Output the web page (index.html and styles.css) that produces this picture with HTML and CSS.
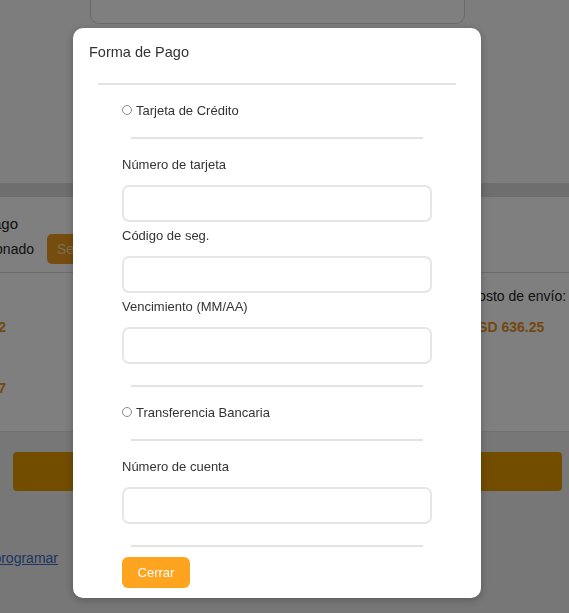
FILE: index.html
```html
<!DOCTYPE html>
<html lang="es">
<head>
<meta charset="utf-8">
<title>Forma de Pago</title>
<link rel="stylesheet" href="styles.css">
</head>
<body>
<div class="page">
  <div class="top-card"></div>
  <div class="top-space"></div>
  <div class="band"></div>
  <section class="pay-section">
    <div class="pay-title">Forma de pago</div>
    <div class="pay-row">
      <span class="pay-status">No seleccionado</span>
      <button class="select-btn" type="button">Seleccionar</button>
    </div>
    <div class="pay-line"></div>
    <div class="totals">
      <div class="totals-left">
        <div class="t-line orange first-val">USD 589.22</div>
        <div class="t-line orange second-val">USD 1,225.47</div>
      </div>
      <div class="totals-gap"></div>
      <div class="totals-right">
        <div class="t-line">Costo de envío:</div>
        <div class="t-line orange">USD 636.25</div>
      </div>
    </div>
  </section>
  <div class="footer-area">
    <div class="big-btn"></div>
    <a class="reprog" href="#">Reprogramar</a>
  </div>
</div>

<div class="overlay">
  <div class="modal">
    <div class="modal-title">Forma de Pago</div>
    <div class="divider-wide"></div>
    <div class="method">
      <label class="radio-row"><span class="radio"></span>Tarjeta de Crédito</label>
      <div class="divider"></div>
      <div class="field-label first">Número de tarjeta</div>
      <input class="field" type="text">
      <div class="field-label">Código de seg.</div>
      <input class="field" type="text">
      <div class="field-label">Vencimiento (MM/AA)</div>
      <input class="field" type="text">
      <div class="divider big"></div>
      <label class="radio-row"><span class="radio"></span>Transferencia Bancaria</label>
      <div class="divider"></div>
      <div class="field-label first">Número de cuenta</div>
      <input class="field" type="text">
      <div class="divider big"></div>
      <button class="close-btn" type="button">Cerrar</button>
    </div>
  </div>
</div>
</body>
</html>
```

FILE: styles.css
```css
* { box-sizing: border-box; }

html, body {
  margin: 0;
  padding: 0;
  height: 100%;
  overflow: hidden;
}

body {
  font-family: "Liberation Sans", Arial, sans-serif;
  color: #333;
  background: #eeeeee;
}

.page {
  width: 569px;
}

.top-card {
  margin-left: 90px;
  width: 375px;
  height: 24px;
  border: 1px solid #d4d4d4;
  border-top: none;
  border-radius: 0 0 9px 9px;
  background: #fff;
}

.top-space {
  background: #fbfbfb;
  margin-top: -24px;
  position: relative;
  z-index: -1;
  height: 183px;
}

.band {
  height: 14px;
  background: #dcdcdc;
}

.pay-section {
  height: 235px;
  background: #fff;
  padding-top: 17px;
  border-bottom: 1px solid #e2e2e2;
}

.pay-title {
  width: 140px;
  margin-left: -122px;
  text-align: right;
  font-size: 15px;
  line-height: 20px;
  color: #222;
}

.pay-row {
  display: flex;
  align-items: center;
  height: 30px;
}

.pay-status {
  width: 130px;
  margin-left: -96px;
  text-align: right;
  font-size: 14px;
  color: #222;
}

.select-btn {
  margin-left: 13px;
  height: 30px;
  padding: 0 10px;
  border: none;
  border-radius: 5px;
  background: #eb9a1e;
  color: #ffd9a0;
  font-family: inherit;
  font-size: 14px;
}

.pay-line {
  margin-top: 8px;
  height: 1px;
  background: #d9d9d9;
}

.totals {
  display: flex;
  padding-top: 14px;
}

.totals-left {
  width: 140px;
  margin-left: -134px;
  text-align: right;
}

.totals-gap { flex: 1; }

.totals-right {
  width: 101px;
}

.t-line {
  font-size: 14px;
  line-height: 18px;
  height: 18px;
  margin-bottom: 13px;
  color: #222;
  white-space: nowrap;
}

.totals-left .first-val { margin-top: 31px; }
.totals-left .second-val { margin-top: 43px; }

.orange {
  color: #e8901c;
  font-weight: bold;
}

.footer-area {
  padding-top: 20px;
}

.big-btn {
  margin: 0 7px 0 13px;
  height: 39px;
  border-radius: 4px;
  background: #e59a00;
}

.reprog {
  display: block;
  width: 120px;
  margin-left: -62px;
  margin-top: 59px;
  text-align: right;
  font-size: 14px;
  color: #3a6cc6;
  text-decoration: underline;
}

/* overlay + modal */
.overlay {
  position: fixed;
  inset: 0;
  background: rgba(0, 0, 0, 0.5);
  padding: 28px 0 0 73px;
}

.modal {
  width: 408px;
  background: #fff;
  border-radius: 10px;
  padding: 16px 0 10px;
  box-shadow: 0 2px 8px rgba(0, 0, 0, 0.25);
}

.modal-title {
  margin-left: 16px;
  font-size: 14.5px;
  line-height: 17px;
  color: #333;
}

.divider-wide {
  margin: 22px 25px 0;
  height: 2px;
  background: #e3e3e3;
}

.method {
  margin-left: 49px;
  width: 310px;
}

.radio-row {
  display: flex;
  align-items: center;
  gap: 4px;
  margin-top: 17px;
  height: 16px;
  font-size: 13px;
  color: #333;
}

.radio {
  width: 10px;
  height: 10px;
  border: 1px solid #8a8a8a;
  border-radius: 50%;
  background: #fff;
}

.divider {
  width: 292px;
  margin: 19px auto 0;
  height: 2px;
  background: #e3e3e3;
}

.divider.big { margin-top: 21px; }

.field-label {
  margin-top: 6px;
  font-size: 13px;
  line-height: 16px;
  color: #333;
}

.field-label.first { margin-top: 18px; }

.field {
  display: block;
  width: 310px;
  height: 37px;
  margin-top: 12px;
  border: 2px solid #e6e6e6;
  border-radius: 7px;
  background: #fff;
  outline: none;
}

.close-btn {
  display: block;
  margin-top: 10px;
  width: 68px;
  height: 31px;
  border: none;
  border-radius: 6px;
  background: #ffa41f;
  color: #fff;
  font-family: inherit;
  font-size: 13px;
}
```
